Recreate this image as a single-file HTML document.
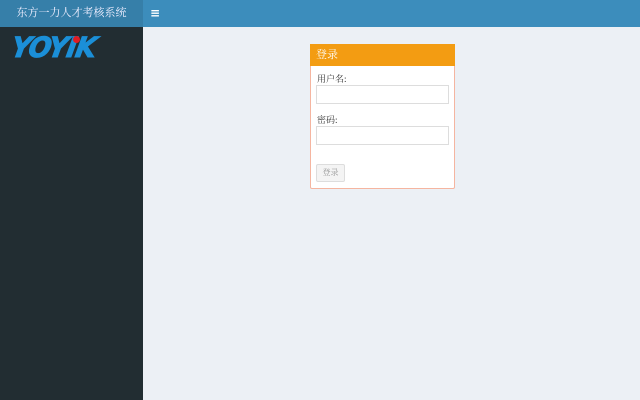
<!DOCTYPE html>
<html><head><meta charset="utf-8"><style>
*{margin:0;padding:0;box-sizing:border-box}
body{width:640px;height:400px;overflow:hidden;background:#ecf0f5;font-family:"Liberation Serif","Noto Serif CJK SC",serif;position:relative}
.hl{position:absolute;left:0;top:0;width:143px;height:27px;background:#367fa9;color:#eef;font-size:11px;line-height:27px;text-align:center}
.hr{position:absolute;left:143px;top:0;right:0;height:27px;background:#3c8dbc;color:#fff;font-size:12px;line-height:27px;padding-left:7px;font-family:"DejaVu Sans",sans-serif;font-weight:bold}
.sb{position:absolute;left:0;top:27px;width:143px;bottom:0;background:#222d32}
.logo{position:absolute;left:14px;top:34px;color:#1b8fd8;font:italic 900 28px "DejaVu Sans",sans-serif;letter-spacing:-1px;transform:skewX(-10deg) scaleX(0.95) scaleY(1);transform-origin:left top;-webkit-text-stroke:1px #1b8fd8;line-height:28px}
.dot{position:absolute;left:73px;top:36px;width:7px;height:7px;border-radius:4px;background:#e01c24}
.panel{position:absolute;left:310px;top:44px;width:145px;height:145px;background:#fff;border:1px solid #f5b5a0;border-radius:2px}
.ph{height:22px;background:#f39c12;color:#fff;font-size:11px;line-height:22px;padding-left:6px;margin:-1px -1px 0}
label{position:absolute;left:6px;font-size:9px;color:#333}
.in{position:absolute;left:5px;width:133px;height:19px;border:1px solid #ddd}
.btn{position:absolute;left:5px;top:119px;width:29px;height:18px;border:1px solid #ddd;border-radius:2px;background:#f4f4f4;color:#999;font-size:8px;line-height:16px;text-align:center}
</style></head><body>
<div class="hl">东方一力人才考核系统</div>
<div class="hr">≡</div>
<div class="sb"></div>
<div class="logo">YOYIK</div><div class="dot"></div>
<div class="panel"><div class="ph">登录</div>
<label style="top:27px">用户名:</label><div class="in" style="top:40px"></div>
<label style="top:68px">密码:</label><div class="in" style="top:81px"></div>
<div class="btn">登录</div></div>
</body></html>
